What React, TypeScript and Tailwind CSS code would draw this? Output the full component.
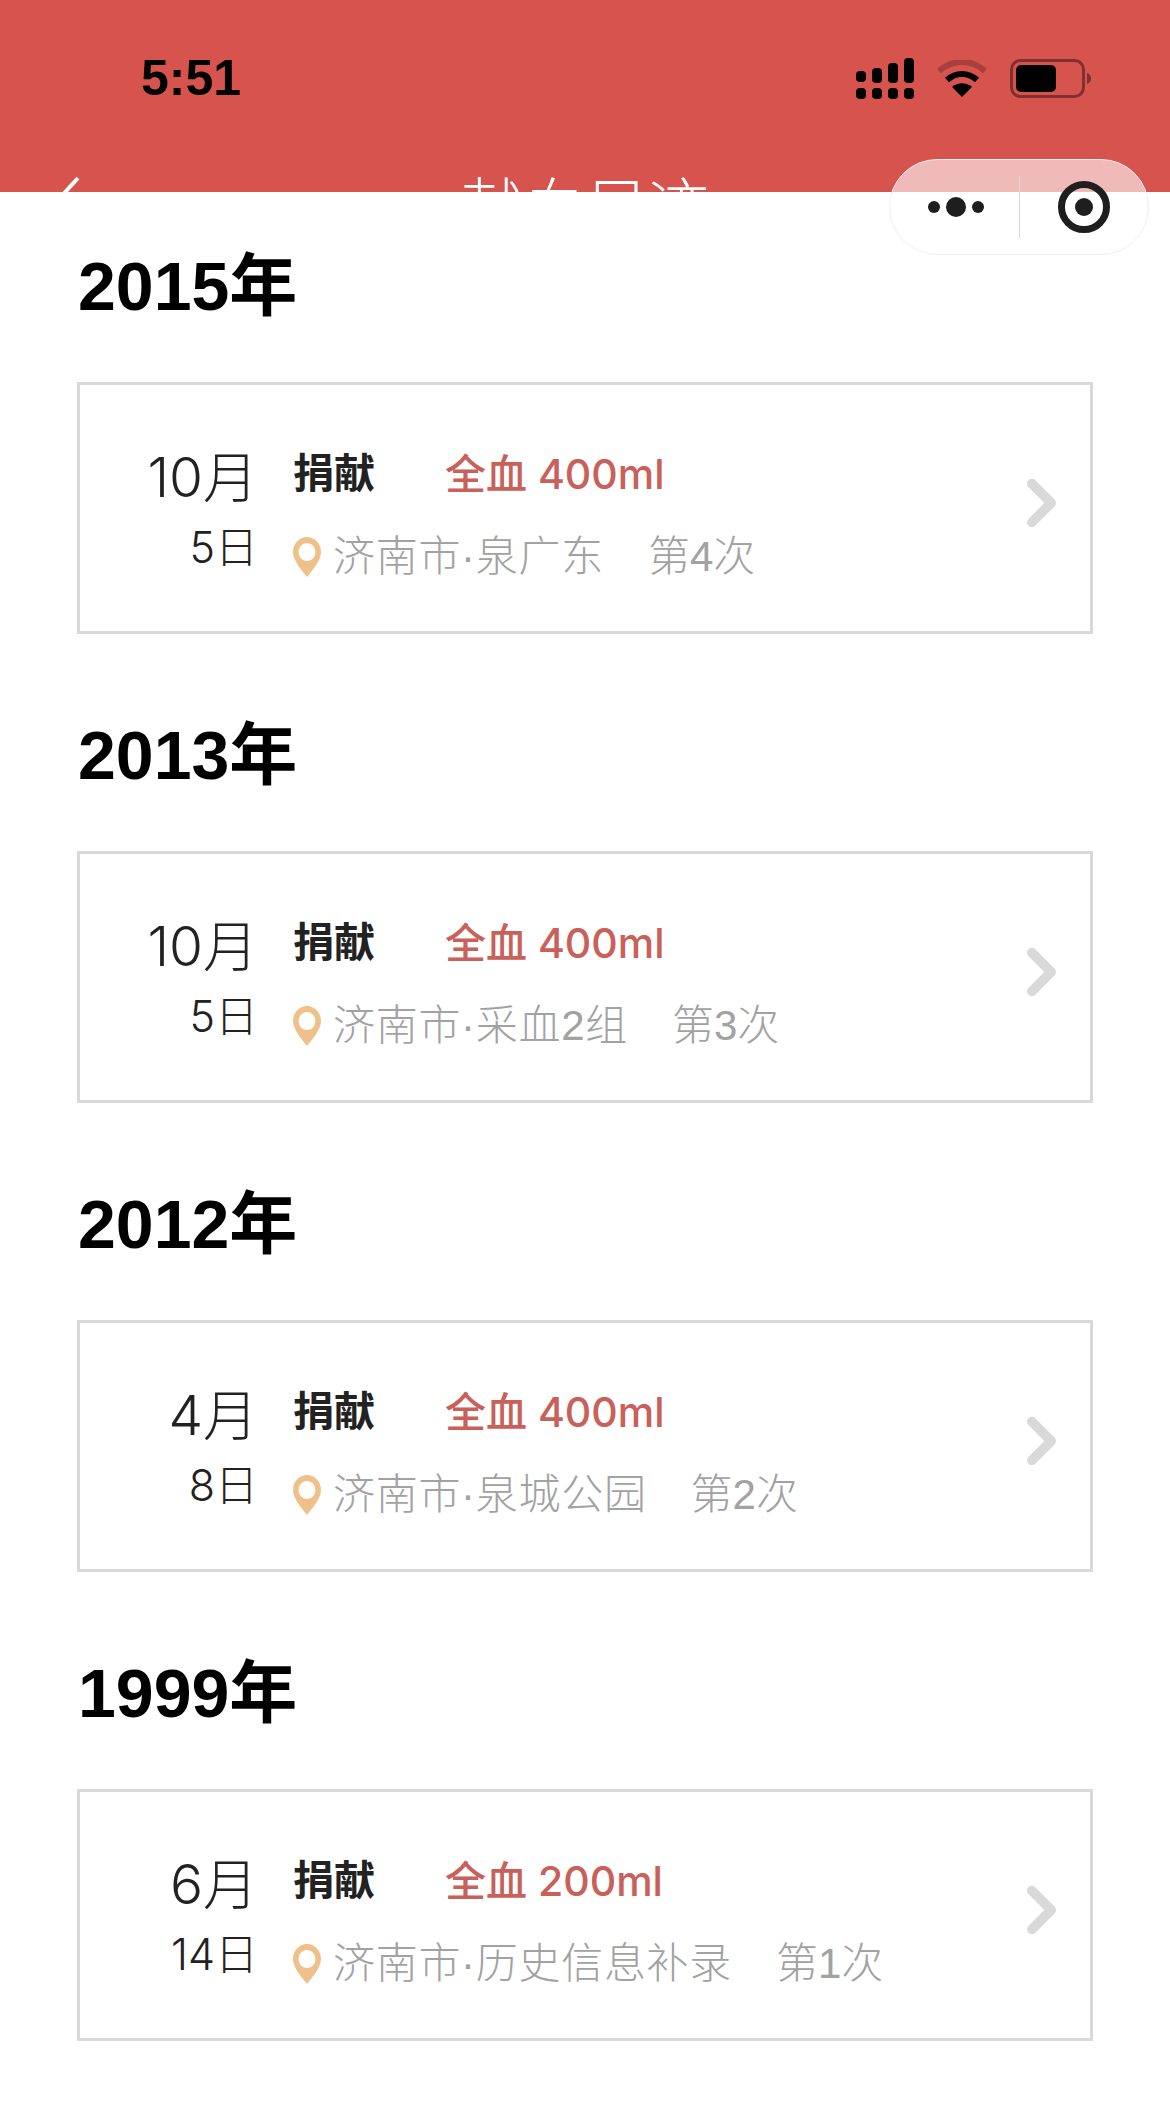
import React from 'react';

const FONT = "font-['Liberation_Sans','Noto_Sans_CJK_SC',sans-serif]";

interface Donation {
  year: string;
  month: string;
  day: string;
  amount: string;
  place: string;
  count: string;
}

const donations: Donation[] = [
  { year: '2015年', month: '10月', day: '5日', amount: '400ml', place: '泉广东', count: '第4次' },
  { year: '2013年', month: '10月', day: '5日', amount: '400ml', place: '采血2组', count: '第3次' },
  { year: '2012年', month: '4月', day: '8日', amount: '400ml', place: '泉城公园', count: '第2次' },
  { year: '1999年', month: '6月', day: '14日', amount: '200ml', place: '历史信息补录', count: '第1次' },
];

const StatusIcons = () => (
  <div className="flex items-center">
    <svg width="58" height="41" viewBox="0 0 58 41" fill="#000">
      <rect x="0" y="13" width="10" height="11" rx="4" />
      <rect x="16" y="10" width="10" height="15" rx="4" />
      <rect x="32" y="5" width="10" height="20" rx="4" />
      <rect x="48" y="0" width="10" height="25" rx="4" />
      <rect x="0" y="30" width="10" height="11" rx="4" />
      <rect x="16" y="30" width="10" height="11" rx="4" />
      <rect x="32" y="30" width="10" height="11" rx="4" />
      <rect x="48" y="30" width="10" height="11" rx="4" />
    </svg>
    <svg className="ml-[23px]" width="50" height="37" viewBox="0 0 50 37">
      <path d="M2 11C16 -1 34 -1 48 11" fill="none" stroke="#000" strokeOpacity="0.22" strokeWidth="6" />
      <path d="M10 20C19 12 31 12 40 20" fill="none" stroke="#000" strokeWidth="6" />
      <path d="M25 37L15 27C21 22 29 22 35 27Z" fill="#000" />
    </svg>
    <svg className="ml-[23px]" width="81" height="39" viewBox="0 0 81 39">
      <rect x="1.5" y="1.5" width="72" height="36" rx="9" fill="none" stroke="#000" strokeOpacity="0.4" strokeWidth="3" />
      <rect x="6" y="6" width="40" height="27" rx="5" fill="#000" />
      <path d="M77 14C80 15 81 17 81 19.5C81 22 80 24 77 25Z" fill="#000" fillOpacity="0.4" />
    </svg>
  </div>
);

const Capsule = () => (
  <div className="absolute left-[889px] top-[159px] flex h-[96px] w-[260px] items-center rounded-[48px] border border-[#f0eeee] bg-white/60">
    <div className="flex w-[129px] items-center justify-center pl-[2px]">
      <svg width="56" height="22" viewBox="0 0 56 22" fill="#1e1e1e">
        <circle cx="6" cy="11" r="6" />
        <circle cx="28" cy="11" r="10" />
        <circle cx="50" cy="11" r="6" />
      </svg>
    </div>
    <div className="h-[62px] w-[1px] bg-[#d8d8d8]" />
    <div className="flex flex-1 items-center justify-center">
      <svg width="52" height="52" viewBox="0 0 52 52">
        <circle cx="26" cy="26" r="22.5" fill="none" stroke="#1e1e1e" strokeWidth="7" />
        <circle cx="26" cy="26" r="9" fill="#1e1e1e" />
      </svg>
    </div>
  </div>
);

const DonationCard = ({ item }: { item: Donation }) => (
  <section>
    <h2 className="flex h-[92px] items-center pl-[1px] text-[68px] font-bold leading-none text-black">{item.year}</h2>
    <div className="mt-[50px] flex h-[252px] items-center border-[3px] border-[#d9d9d9] bg-white pr-[34px]">
      <div className="w-[178px] text-right text-[#222] font-['Inter','Noto_Sans_CJK_SC',sans-serif]">
        <div className="text-[55px] leading-[66px] font-light">{item.month}</div>
        <div className="mt-[12px] text-[43px] leading-[50px] font-light">{item.day}</div>
      </div>
      <div className="ml-[35px] flex-1 pt-[15px]">
        <div className="flex h-[60px] items-center text-[41px] leading-none">
          <span className="w-[152px] font-bold text-[#222]">捐献</span>
          <span className="font-medium text-[#c9605a] font-['Inter','Noto_Sans_CJK_SC',sans-serif]">全血 {item.amount}</span>
        </div>
        <div className="mt-[22px] flex h-[60px] items-center text-[42px] leading-none text-[#a2a2a2]">
          <svg width="28" height="40" viewBox="0 0 30 40" preserveAspectRatio="none">
            <path
              fillRule="evenodd"
              fill="#f0c08a"
              d="M15 0C6.7 0 0 6.7 0 15C0 24 10 34 15 40C20 34 30 24 30 15C30 6.7 23.3 0 15 0ZM15 6C20 6 24 10 24 15C24 20 20 24 15 24C10 24 6 20 6 15C6 10 10 6 15 6Z"
            />
          </svg>
          <span className="ml-[12px] font-light tracking-[0.7px]">济南市·{item.place}</span>
          <span className="ml-[44px] font-light">{item.count}</span>
        </div>
      </div>
      <svg className="mb-[10px] ml-[-1px]" width="29" height="50" viewBox="0 0 30 50">
        <path d="M5 5L25 25L5 45" fill="none" stroke="#d9d9d9" strokeWidth="10" strokeLinecap="round" strokeLinejoin="round" />
      </svg>
    </div>
  </section>
);

export default function App() {
  return (
    <div className={`relative min-h-[2114px] w-[1170px] overflow-hidden bg-white ${FONT}`}>
      <header className="h-[192px] overflow-hidden bg-[#d6534e]">
        <div className="flex h-[156px] items-center justify-between pl-[141px] pr-[79px]">
          <span className="text-[50px] font-bold leading-none text-black">5:51</span>
          <StatusIcons />
        </div>
        <div className="relative flex h-[80px] justify-center pt-[22px]">
          <svg className="absolute left-[52px] top-[20px]" width="30" height="50" viewBox="0 0 30 50">
            <path d="M26 2L5 25L26 48" fill="none" stroke="#fff" strokeWidth="4" />
          </svg>
          <span className="text-[62px] leading-none font-light text-white">献血足迹</span>
        </div>
      </header>
      <Capsule />
      <main className="flex flex-col gap-[75px] px-[77px] pt-[48px]">
        {donations.map((item) => (
          <DonationCard key={item.year} item={item} />
        ))}
      </main>
    </div>
  );
}
